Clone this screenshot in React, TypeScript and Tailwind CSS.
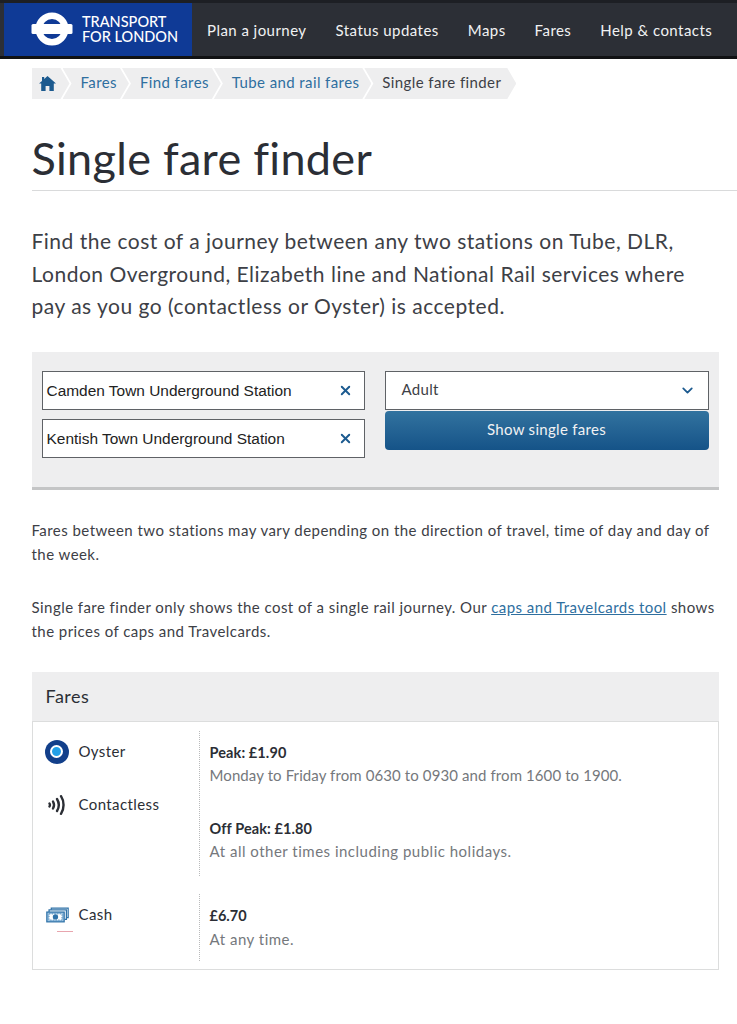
import { ChevronDown, X } from 'lucide-react';

const navItems = ['Plan a journey', 'Status updates', 'Maps', 'Fares', 'Help & contacts'];
const crumbs = ['Fares', 'Find fares', 'Tube and rail fares'];

function Roundel() {
  return (
    <svg width="42" height="34" viewBox="0 0 42 34" className="-mt-[2px] shrink-0">
      <circle cx="21" cy="17" r="13.25" fill="none" stroke="#fff" strokeWidth="6.5" />
      <rect x="0.5" y="12" width="41" height="10" rx="1.5" fill="#fff" />
    </svg>
  );
}

function HomeIcon() {
  return (
    <svg width="17" height="17" viewBox="0 0 17 17">
      <path d="M8.5 1 L17 8.6 L14.8 8.6 L14.8 16 L10.4 16 L10.4 11 L6.6 11 L6.6 16 L2.2 16 L2.2 8.6 L0 8.6 L3 5.9 L3 2 L5.2 2 L5.2 4 Z" fill="#1c5a8f" />
    </svg>
  );
}

function ContactlessIcon() {
  return (
    <svg width="18" height="20" viewBox="0 0 18 20" fill="none" stroke="#2b2e35" strokeLinecap="round">
      <path d="M1.5 8.5c.6 1 .6 2 0 3" strokeWidth="2.4" />
      <path d="M5 6.5c1.3 2.2 1.3 4.8 0 7" strokeWidth="2.4" />
      <path d="M9 4c2.2 3.6 2.2 8.4 0 12" strokeWidth="2.4" />
      <path d="M13 1.2c3.4 5.2 3.4 12.4 0 17.6" strokeWidth="2.4" />
    </svg>
  );
}

function CashIcon() {
  return (
    <svg width="25" height="16" viewBox="0 0 26 18" fill="none" stroke="#2f72a8" strokeWidth="1.4">
      <path d="M6 3V1.2h19V12h-2" />
      <path d="M3.5 5.5V3.3h19.5V14h-2" />
      <rect x="1" y="5.7" width="19.5" height="11" fill="#9cc3e2" />
      <rect x="3.5" y="7.8" width="14.5" height="6.8" fill="#fff" strokeWidth="0.8" strokeDasharray="1.5 1.5" />
      <circle cx="10.7" cy="11.2" r="3" fill="#2f72a8" stroke="none" />
    </svg>
  );
}

export default function App() {
  return (
    <div className="min-h-[1024px] bg-white font-['Lato','Liberation_Sans',sans-serif] text-[#2b2e35]">
      <header className="flex h-[59px] border-t-[3px] border-b-[3px] border-t-[#1d1f24] border-b-[#111214] bg-[#2c2f36] pl-[4px]">
        <div className="flex w-[188px] items-center gap-[9px] bg-[#0f3a96] pl-[27px]">
          <Roundel />
          <div className="-mt-[2px] text-[14.5px] leading-[15px] font-medium text-white">
            <div>TRANSPORT</div>
            <div>FOR LONDON</div>
          </div>
        </div>
        <nav className="flex items-center gap-[29px] pt-[2px] pl-[15px] text-[15px] tracking-[0.45px] text-[#f1f2f3]">
          {navItems.map((item) => (
            <span key={item} className="whitespace-nowrap">{item}</span>
          ))}
        </nav>
      </header>

      <main className="pt-[9px] pr-[32px] pl-[31.5px]">
        <div className="flex h-[31px] items-stretch text-[15px] tracking-[0.4px]">
          <div className="flex w-[38px] items-center bg-[#eeeeef] pl-[7px] [clip-path:polygon(0_0,29px_0,38px_50%,29px_100%,0_100%)]">
            <HomeIcon />
          </div>
          {crumbs.map((crumb) => (
            <div
              key={crumb}
              className="-ml-[7px] flex items-center bg-[#eeeeef] pr-[12px] pb-[3px] pl-[18px] text-[#2f6f9f] [clip-path:polygon(0_0,calc(100%-9px)_0,100%_50%,calc(100%-9px)_100%,0_100%,9px_50%)]"
            >
              {crumb}
            </div>
          ))}
          <div className="-ml-[7px] flex items-center bg-[#eeeeef] pr-[15px] pb-[3px] pl-[18px] text-[#3d4046] [clip-path:polygon(0_0,calc(100%-9px)_0,100%_50%,calc(100%-9px)_100%,0_100%,9px_50%)]">
            Single fare finder
          </div>
        </div>

        <h1 className="mt-[32px] -mr-[32px] border-b border-[#d9dadb] pb-[5px] text-[45px] leading-[54px] font-normal tracking-[0.3px]">
          Single fare finder
        </h1>

        <p className="mt-[34px] text-[21px] leading-[32.5px] tracking-[0.5px] text-[#3d4046]">
          Find the cost of a journey between any two stations on Tube, DLR, London Overground, Elizabeth line and National Rail services where pay as you go (contactless or Oyster) is accepted.
        </p>

        <section className="mt-[29px] mr-[-14px] flex h-[138px] gap-[20px] border-b-[3px] border-[#c4c5c6] bg-[#eeeeef] pt-[19px] pl-[10px]">
          <div className="flex w-[323px] flex-col gap-[9px]">
            {['Camden Town Underground Station', 'Kentish Town Underground Station'].map((station) => (
              <div
                key={station}
                className="flex h-[39px] items-center justify-between border border-[#5f6266] bg-white pr-[11px] pl-[4px] font-['Liberation_Sans',sans-serif] text-[15.45px] text-[#222]"
              >
                <span className="mt-[1px]">{station}</span>
                <X size={15} strokeWidth={3} className="text-[#1c5a8f]" />
              </div>
            ))}
          </div>
          <div className="flex w-[324px] flex-col gap-[1px]">
            <div className="flex h-[39px] items-center justify-between border border-[#5f6266] bg-white pr-[12px] pl-[16px] text-[15px] tracking-[0.3px] text-[#3d4046]">
              <span className="-mt-[1px]">Adult</span>
              <ChevronDown size={17} strokeWidth={2.5} className="text-[#1c5a8f]" />
            </div>
            <button className="h-[39px] rounded-[4px] bg-gradient-to-b from-[#32739f] to-[#155388] pb-[2px] text-[15px] tracking-[0.3px] text-[#f1f2f3]">
              Show single fares
            </button>
          </div>
        </section>

        <p className="mt-[28px] -mr-[14px] text-[15px] leading-[24px] tracking-[0.45px] text-[#3d4046]">
          Fares between two stations may vary depending on the direction of travel, time of day and day of the week.
        </p>
        <p className="mt-[29px] -mr-[20px] text-[15px] leading-[24px] tracking-[0.45px] text-[#3d4046]">
          Single fare finder only shows the cost of a single rail journey. Our{' '}
          <a className="text-[#2f6f9f] underline">caps and Travelcards tool</a> shows the prices of caps and Travelcards.
        </p>

        <div className="mt-[29px] mr-[-14px]">
          <div className="flex h-[49px] items-center bg-[#eeeeef] pl-[14px] text-[18px] tracking-[0.5px]">Fares</div>
          <div className="h-[249px] border border-[#dcdddd] pt-[9px]">
            <div className="flex h-[145px]">
              <div className="flex w-[166px] flex-col gap-[29px] pt-[9px] pl-[12px] text-[15px] tracking-[0.4px]">
                <div className="flex h-[24px] items-center gap-[10px]">
                  <span className="flex h-[24px] w-[24px] items-center justify-center rounded-full bg-[#123f8a]">
                    <span className="h-[13px] w-[13px] rounded-full border-2 border-white bg-[#22a0e8]" />
                  </span>
                  Oyster
                </div>
                <div className="flex h-[24px] items-center gap-[10px]">
                  <span className="flex w-[24px] justify-center"><ContactlessIcon /></span>
                  Contactless
                </div>
              </div>
              <div className="border-l border-dotted border-[#b9babb] pt-[10px] pl-[10px] text-[15px] leading-[23px]">
                <div className="text-[14.5px] font-bold tracking-[0.1px]">Peak: £1.90</div>
                <div className="tracking-[0.1px] text-[#75787c]">Monday to Friday from 0630 to 0930 and from 1600 to 1900.</div>
                <div className="mt-[30px] text-[14.5px] font-bold tracking-[0.1px]">Off Peak: £1.80</div>
                <div className="tracking-[0.5px] text-[#75787c]">At all other times including public holidays.</div>
              </div>
            </div>
            <div className="mt-[18px] flex h-[67px]">
              <div className="w-[166px] pt-[9px] pl-[12px] text-[15px] tracking-[0.4px]">
                <div className="flex h-[24px] items-center gap-[9px]">
                  <CashIcon />
                  Cash
                </div>
                <div className="mt-[4px] ml-[12px] h-px w-[16px] bg-[#e8a5ae]" />
              </div>
              <div className="border-l border-dotted border-[#b9babb] pt-[10px] pl-[10px] text-[15px] leading-[23px]">
                <div className="text-[14.5px] font-bold">£6.70</div>
                <div className="mt-[1px] tracking-[0.5px] text-[#75787c]">At any time.</div>
              </div>
            </div>
          </div>
        </div>
      </main>
    </div>
  );
}
